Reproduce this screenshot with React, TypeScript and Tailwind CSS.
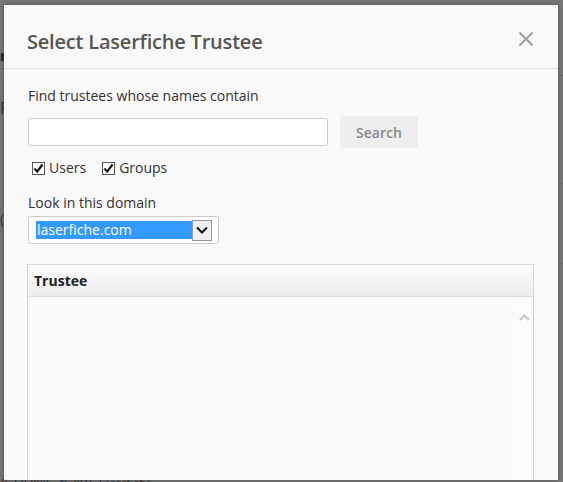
import React from "react";

function Check() {
  return (
    <span className="w-[13px] h-[13px] border border-[#555] bg-white flex items-center justify-center">
      <svg width="11" height="11" viewBox="0 0 11 11">
        <path d="M1.5 5.5 L4.2 8.6 L9.5 1.5" fill="none" stroke="#111" strokeWidth="2.2" />
      </svg>
    </span>
  );
}

export default function App() {
  return (
    <div
      className="relative w-[563px] h-[482px] overflow-hidden bg-[#767676]"
      style={{ fontFamily: '"Open Sans", "Noto Sans", sans-serif' }}
    >
      {/* background page peeking through overlay */}
      <div className="absolute inset-0 text-[#1a1a1a]">
        <div className="absolute left-0 top-[48px] text-[15px] font-bold leading-none">r</div>
        <div className="absolute left-0 top-[75px] w-full h-px bg-[#6a6a6a]" />
        <div className="absolute left-0 top-[100px] text-[16px] leading-none text-[#3a2a2a]">F</div>
        <div className="absolute left-0 top-[183px] w-full h-px bg-[#6c6c6c]" />
        <div className="absolute left-0 top-[212px] text-[14px] leading-none text-[#333]">(</div>
        <div className="absolute left-0 top-[263px] w-full h-px bg-[#6c6c6c]" />
        <div className="absolute left-0 top-[478px] text-[9px] leading-none text-[#222] tracking-[1px]">
          © 2.0.000 · © 2016 Laserfiche
        </div>
      </div>

      {/* dialog */}
      <div className="absolute left-[4px] top-[5px] w-[554px] h-[475px] overflow-hidden bg-[#f9f9f9] shadow-[0_0_4px_rgba(0,0,0,0.3)]">
        <div className="h-[64px] border-b border-[#e0e0e0] flex items-center justify-between pl-[23px] pr-[24px]">
          <div className="text-[20px] font-semibold text-[#555] tracking-[-0.2px] pt-[10px]">
            Select Laserfiche Trustee
          </div>
          <svg width="16" height="16" viewBox="0 0 16 16" className="mt-[4px]">
            <path d="M1.5 1.5 L14.5 14.5 M14.5 1.5 L1.5 14.5" stroke="#a0a0a0" strokeWidth="2" />
          </svg>
        </div>

        <div className="pl-[24px] pr-[24px]">
          <div className="mt-[17px] text-[14px] text-[#333] leading-[20px]">
            Find trustees whose names contain
          </div>
          <div className="mt-[10px] flex items-center gap-[12px]">
            <div className="w-[300px] h-[28px] border border-[#ccc] rounded-[3px] bg-white" />
            <button className="w-[78px] h-[32px] bg-[#eeeeee] rounded-[2px] text-[14px] font-semibold text-[#8a8a8a]">
              Search
            </button>
          </div>
          <div className="mt-[10px] flex items-center text-[14px] text-[#333] leading-[20px]">
            <span className="ml-[4px]"><Check /></span>
            <span className="ml-[4px]">Users</span>
            <span className="ml-[16px]"><Check /></span>
            <span className="ml-[4px]">Groups</span>
          </div>
          <div className="mt-[15px] text-[14px] text-[#333] leading-[20px]">Look in this domain</div>
          <div className="mt-[3px] w-[191px] h-[28px] border border-[#ccc] rounded-[3px] bg-white flex items-center pl-[7px]">
            <div className="w-[156px] h-[18px] bg-[#3399ff] text-white text-[14px] leading-[18px] pl-[1px]">
              laserfiche.com
            </div>
            <div className="w-[20px] h-[21px] border border-[#999] bg-[#f0f0f0] flex items-center justify-center">
              <svg width="12" height="8" viewBox="0 0 12 8">
                <path d="M1 1.5 L6 6.5 L11 1.5" fill="none" stroke="#111" strokeWidth="2" />
              </svg>
            </div>
          </div>

          <div className="mt-[20px] -ml-px w-[507px] h-[240px] border border-[#d8d8d8] bg-[#fafafa]">
            <div className="h-[32px] border-b border-[#dcdcdc] bg-gradient-to-b from-[#fdfdfd] to-[#ececec] flex items-center pl-[6px] text-[14px] font-bold text-[#222]">
              Trustee
            </div>
            <div className="flex justify-end h-full">
              <div className="w-[18px] bg-[#fbfbfb] flex justify-center pt-[17px]">
                <svg width="11" height="7" viewBox="0 0 11 7">
                  <path d="M1 6 L5.5 1.5 L10 6" fill="none" stroke="#c8c8c8" strokeWidth="2.4" />
                </svg>
              </div>
            </div>
          </div>
        </div>
      </div>
    </div>
  );
}
